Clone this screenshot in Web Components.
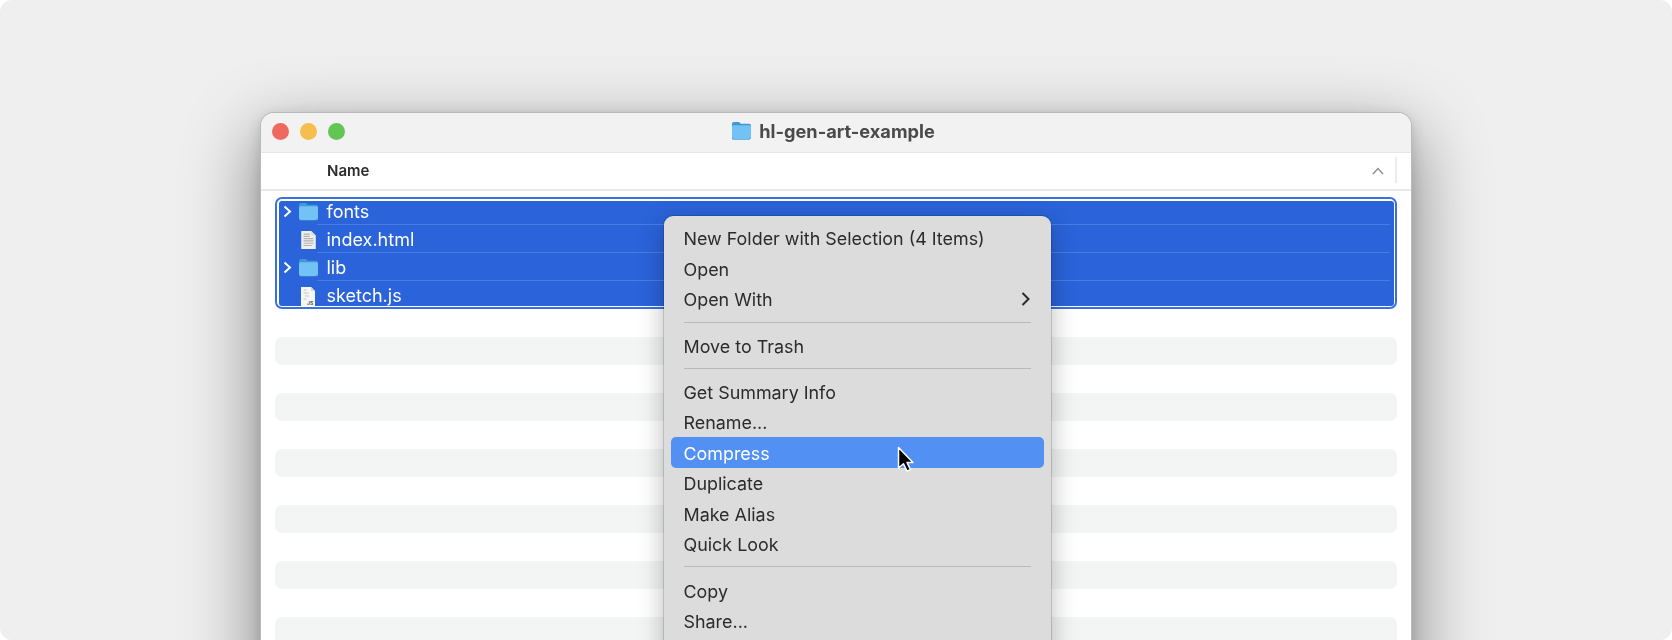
<!DOCTYPE html>
<html><head><meta charset="utf-8"><style>
html,body{margin:0;padding:0;background:#fff}
body{width:1672px;height:640px;overflow:hidden;font-family:Inter,"Liberation Sans",sans-serif}
</style></head><body>
<finder-page>
  <finder-window title="hl-gen-art-example">
    <file-row kind="folder" arrow>fonts</file-row>
    <file-row kind="html" line>index.html</file-row>
    <file-row kind="folder" arrow line>lib</file-row>
    <file-row kind="js" line>sketch.js</file-row>
  </finder-window>
  <context-menu slot="over">
    <menu-item>New Folder with Selection (4 Items)</menu-item>
    <menu-item>Open</menu-item>
    <menu-item submenu>Open With</menu-item>
    <menu-sep></menu-sep>
    <menu-item>Move to Trash</menu-item>
    <menu-sep></menu-sep>
    <menu-item>Get Summary Info</menu-item>
    <menu-item>Rename...</menu-item>
    <menu-item active>Compress</menu-item>
    <menu-item>Duplicate</menu-item>
    <menu-item>Make Alias</menu-item>
    <menu-item>Quick Look</menu-item>
    <menu-sep></menu-sep>
    <menu-item>Copy</menu-item>
    <menu-item>Share...</menu-item>
  </context-menu>
  <mouse-cursor slot="over"></mouse-cursor>
</finder-page>
<script>
const FOLDER=`<svg viewBox="0 0 21 19" width="21" height="19" style="display:block"><path d="M1 3.2C1 1.8 1.8 1 3 1h4.2c.9 0 1.3.3 1.9 1l.7.8H18c1.300 0 2 .8 2 2V16.500c0 1.100-.7 1.800-1.900 1.800H2.900C1.700 18.300 1 17.600 1 16.500z" fill="#3f97d4"/><path d="M1 5.800c0-1 .7-1.600 1.700-1.600h15.600c1 0 1.700.6 1.700 1.600v10.500c0 1.100-.7 1.700-1.800 1.700H2.800C1.700 18 1 17.400 1 16.300z" fill="#72c2f5"/><path d="M1 16.300c0 1.100.7 1.700 1.800 1.700h14.400c1.100 0 1.800-.6 1.800-1.700v.6c0 1-.7 1.500-1.800 1.500H2.800c-1.100 0-1.800-.5-1.800-1.500z" fill="#3d8cc6"/></svg>`;
class FinderPage extends HTMLElement{constructor(){super();this.attachShadow({mode:'open'}).innerHTML=`<style>
:host{display:block;position:relative;width:1672px;height:640px;box-sizing:border-box;padding:113px 0 0 261px;background:#efefef;border-radius:12px;overflow:hidden;filter:blur(.3px)}
</style><slot></slot><slot name="over"></slot>`}}
class FinderWindow extends HTMLElement{constructor(){super();const t=this.getAttribute('title');this.attachShadow({mode:'open'}).innerHTML=`<style>
:host{display:block;width:1150px;height:700px;box-sizing:border-box;background:#fff;border-radius:13px 13px 0 0;box-shadow:0 0 0 1px #b9b9b9,0 26px 70px 6px rgba(0,0,0,.42),0 4px 16px rgba(0,0,0,.16)}
.title{height:40px;box-sizing:border-box;background:#f2f2f2;border-bottom:1px solid #e6e6e6;border-radius:13px 13px 0 0;display:grid;grid-template-columns:1fr auto 1fr;align-items:center;padding-left:11px}
.lights{display:flex;gap:11px;position:relative;top:-1px}.lights i{width:17px;height:17px;border-radius:50%;display:block}
.name{display:flex;align-items:center;gap:7px;font:700 18.200px Inter,"Liberation Sans",sans-serif;color:#4a4a4a;position:relative;left:-8.500px;top:-2px}
.head{height:38px;box-sizing:border-box;border-bottom:2px solid #e8e8e8;display:flex;align-items:center;padding:0 14px 2px 66px;font:600 15px Inter,"Liberation Sans",sans-serif;color:#2c2c2c;justify-content:space-between}
.head .end{display:flex;align-items:center;gap:12px;height:26px}
.head .bar{width:2px;height:26px;background:#ececec;display:block}
.body{padding:5px 14px 0 14px}
.sel{height:112px;box-sizing:border-box;border:2px solid #3a70e0;border-radius:7px;background:#fff;padding:1.500px;margin:1px 0 0 0}
.list{height:105px;background:#2a63da;border-radius:3px;overflow:hidden;margin-top:.5px}
.list ::slotted(file-row:first-child){margin-top:-3.400px}
.stripes{display:flex;flex-direction:column;gap:28px;margin-top:28px}
.stripes i{display:block;height:28px;border-radius:7px;background:#f3f4f4}
</style>
<div class="title"><div class="lights"><i style="background:#ee6a5f"></i><i style="background:#f6be4f"></i><i style="background:#62c554"></i></div>
<div class="name">${FOLDER}<span>${t}</span></div><div></div></div>
<div class="head"><span>Name</span><span class="end"><svg width="12" height="8" viewBox="0 0 12 8" style="position:relative;top:1px;left:1px"><path d="M1 7 6 1.500 11 7" fill="none" stroke="#8d8d8d" stroke-width="1.400"/></svg><span class="bar"></span></span></div>
<div class="body"><div class="sel"><div class="list"><slot></slot></div></div>
<div class="stripes"><i></i><i></i><i></i><i></i><i></i><i></i></div></div>`}}
class FileRow extends HTMLElement{constructor(){super();const k=this.getAttribute('kind');
const icon=k==='folder'?FOLDER:k==='html'?`<svg viewBox="0 0 18 22" width="17" height="20" style="display:block"><path d="M1 1h11l5 5v15H1z" fill="#f0f0ee"/><path d="M12 1l5 5h-5z" fill="#d9d9d6"/><path d="M3.500 4.500h7M3.500 7h7M3.500 9.500h11M3.500 12h11M3.500 14.500h11M3.500 17h9" stroke="#b0b0ad" stroke-width="1.200"/></svg>`:`<svg viewBox="0 0 16 20" width="16" height="20" style="display:block"><path d="M1 1h10l4 4v15H1z" fill="#f6f6f4"/><path d="M11 1l4 4h-4z" fill="#d5d5d2"/><path d="M3.500 4h3M3.500 7h5M5 10h4M3.500 13h3" stroke="#c4c4c4" stroke-width="1"/><text x="7" y="18.500" font-size="5" font-weight="700" font-family="Inter,sans-serif" fill="#555">JS</text></svg>`;
this.attachShadow({mode:'open'}).innerHTML=`<style>
:host{display:block;height:28px;position:relative;font:400 18px Inter,"Liberation Sans",sans-serif;color:#fff}
.r{display:flex;align-items:center;height:28px}
.a{width:20px;flex:none;padding-left:4px;box-sizing:border-box;position:relative;top:0}
.a svg{display:block}
.i{width:25px;flex:none;display:flex;justify-content:center;padding-right:4px;box-sizing:border-box;position:relative;left:-1px}
.t{margin-left:3px}
.l{position:absolute;left:38px;right:4px;top:-1.600px;height:1px;background:#4a7de3}
</style>${this.hasAttribute('line')?'<div class="l"></div>':''}<div class="r"><span class="a">${this.hasAttribute('arrow')?'<svg width="9" height="13" viewBox="0 0 9 13"><path d="M1.500 1.500 7 6.500 1.500 11.500" fill="none" stroke="#fff" stroke-width="2"/></svg>':''}</span><span class="i">${icon}</span><span class="t"><slot></slot></span></div>`}}
class ContextMenu extends HTMLElement{constructor(){super();this.attachShadow({mode:'open'}).innerHTML=`<style>
:host{display:block;position:absolute;left:664px;top:216px;width:387px;height:500px;box-sizing:border-box;background:#dcdcdc;border-radius:9px;padding:7px;box-shadow:0 0 0 1px rgba(0,0,0,.14),0 8px 26px rgba(0,0,0,.28);font:400 17.900px Inter,"Liberation Sans",sans-serif;color:#2b2b2b}
</style><slot></slot>`}}
class MenuItem extends HTMLElement{constructor(){super();this.attachShadow({mode:'open'}).innerHTML=`<style>
:host{display:flex;align-items:center;justify-content:space-between;height:30.500px;box-sizing:border-box;padding:0 13px 0 12.500px;border-radius:5px}
:host([active]){background:#5290f4;color:#fff}
span{position:relative;top:.7px}
svg{display:block;margin-right:0}
</style><span><slot></slot></span>${this.hasAttribute('submenu')?'<svg width="11" height="16" viewBox="0 0 11 16"><path d="M2.500 2 8.500 8 2.500 14" fill="none" stroke="#2b2b2b" stroke-width="2"/></svg>':''}`}}
class MenuSep extends HTMLElement{constructor(){super();this.attachShadow({mode:'open'}).innerHTML=`<style>
:host{display:block;height:15.700px;box-sizing:border-box;padding:7px 13px 0}
i{display:block;height:1px;background:#b9b9b9}
</style><i></i>`}}
class MouseCursor extends HTMLElement{constructor(){super();this.attachShadow({mode:'open'}).innerHTML=`<style>
:host{display:block;position:absolute;left:896px;top:445px;width:20px;height:29px}
</style><svg width="20" height="29" viewBox="0 0 20 29"><path d="M2.500 2.500V23L7.500 18.800 11 26 14.500 24.600 11 17.500H17z" fill="#000" stroke="#fff" stroke-width="1.500" stroke-linejoin="round"/></svg>`}}
customElements.define('finder-page',FinderPage);
customElements.define('finder-window',FinderWindow);
customElements.define('file-row',FileRow);
customElements.define('context-menu',ContextMenu);
customElements.define('menu-item',MenuItem);
customElements.define('menu-sep',MenuSep);
customElements.define('mouse-cursor',MouseCursor);
</script>
</body></html>
